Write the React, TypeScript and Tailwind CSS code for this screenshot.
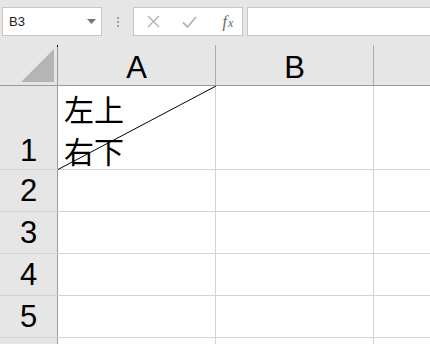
import React from 'react';

const cellLine = 'border-[#d4d4d4]';

function RowHead({ n, h, first }: { n?: number; h: string; first?: boolean }) {
  return (
    <div className={`flex ${h} border-b ${cellLine}`}>
      <div className={`w-[58px] shrink-0 bg-[#e6e6e6] border-r border-[#9b9b9b] flex items-end justify-center ${first ? 'pb-[3px]' : 'pb-[5px]'} text-[31px] leading-none text-black`}>
        {n}
      </div>
      <div className={`w-[158px] shrink-0 border-r ${cellLine}`} />
      <div className={`w-[158px] shrink-0 border-r ${cellLine}`} />
      <div className="flex-1" />
    </div>
  );
}

export default function App() {
  return (
    <div className="w-[430px] h-[344px] overflow-hidden bg-white" style={{ fontFamily: '"Liberation Sans", Arial, sans-serif' }}>
      {/* formula bar */}
      <div className="h-[45px] bg-[#e6e6e6] flex items-start pt-[7px] pl-[2px]">
        <div className="w-[100px] h-[29px] bg-white border border-[#c6c6c6] flex items-center pl-[6px] pr-[5px] text-[13px] text-[#222]">
          <span className="flex-1">B3</span>
          <svg width="9" height="5" viewBox="0 0 9 5">
            <path d="M0 0h9L4.5 5z" fill="#777" />
          </svg>
        </div>
        <div className="w-[31px] h-[29px] flex flex-col items-center justify-center gap-[2px]">
          <span className="w-[2px] h-[2px] bg-[#a0a0a0]" />
          <span className="w-[2px] h-[2px] bg-[#a0a0a0]" />
          <span className="w-[2px] h-[2px] bg-[#a0a0a0]" />
        </div>
        <div className="w-[110px] h-[29px] bg-white border border-[#c6c6c6] flex items-center">
          <div className="w-[38px] flex justify-center">
            <svg width="13" height="13" viewBox="0 0 13 13">
              <path d="M1 1l11 11M12 1L1 12" stroke="#b4b4b4" strokeWidth="1.4" />
            </svg>
          </div>
          <div className="w-[34px] flex justify-center">
            <svg width="15" height="12" viewBox="0 0 15 12">
              <path d="M1 6.5l4.5 4.5L14 1" stroke="#b4b4b4" strokeWidth="1.8" fill="none" />
            </svg>
          </div>
          <div
            className="flex-1 flex items-baseline justify-center pl-[8px] italic text-[#666] leading-none"
            style={{ fontFamily: '"Liberation Serif", serif' }}
          >
            <span className="text-[16px]">f</span>
            <span className="text-[12px] ml-[1px]">x</span>
          </div>
        </div>
        <div className="flex-1 ml-[4px] h-[29px] bg-white border border-[#c6c6c6] border-r-0" />
      </div>

      {/* column headers */}
      <div className="relative flex h-[41px] bg-[#e6e6e6] border-b border-[#9b9b9b] text-[31px] leading-none text-black">
        <div className="w-[58px] shrink-0 border-r border-[#9b9b9b] flex items-end justify-end pr-[3px] pb-[3px]">
          <svg width="33" height="33" viewBox="0 0 33 33">
            <path d="M33 0V33H0z" fill="#b5b5b5" />
          </svg>
        </div>
        <div className="w-[158px] shrink-0 border-r border-[#ababab] flex items-center justify-center pt-[4px]">A</div>
        <div className="w-[158px] shrink-0 border-r border-[#ababab] flex items-center justify-center pt-[4px]">B</div>
        <div className="flex-1" />
        <div className="absolute left-[57px] top-0 w-[1px] h-[2px] bg-black" />
      </div>

      {/* rows */}
      <div className="relative">
        <RowHead n={1} h="h-[84px]" first />
        <RowHead n={2} h="h-[42px]" />
        <RowHead n={3} h="h-[42px]" />
        <RowHead n={4} h="h-[42px]" />
        <RowHead n={5} h="h-[42px]" />
        <RowHead h="h-[42px]" />

        {/* A1 content: diagonal split cell */}
        <div
          className="absolute left-[58px] top-0 w-[157px] h-[83px] pl-[6px] pt-[1px] text-[30px] leading-[42px] text-black"
          style={{ fontFamily: '"Noto Sans CJK SC", "Noto Sans", sans-serif' }}
        >
          <div>左上</div>
          <div>右下</div>
          <svg className="absolute left-0 top-0" width="158" height="84" viewBox="0 0 158 84">
            <line x1="0" y1="83.5" x2="158" y2="0" stroke="#000" strokeWidth="1" />
          </svg>
        </div>
      </div>
    </div>
  );
}
